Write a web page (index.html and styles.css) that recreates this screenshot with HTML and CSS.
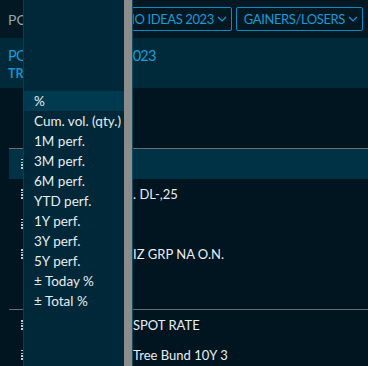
FILE: index.html
```html
<!DOCTYPE html>
<html lang="en">
<head>
    <meta charset="UTF-8">
    <meta name="viewport" content="width=device-width, initial-scale=1.0">
    <title>Portfolio Ideas</title>
    <link rel="stylesheet" href="styles.css">
</head>
<body>
    <div class="app">
        <div class="topbar">
            <div class="page-label">PORTFOLIO</div>
            <div class="selects">
                <button class="select">PORTFOLIO IDEAS 2023
                    <svg class="chevron" width="10" height="6" viewBox="0 0 10 6"><path d="M1 1l4 4 4-4" fill="none" stroke="currentColor" stroke-width="1.2"/></svg>
                </button>
                <button class="select">GAINERS/LOSERS
                    <svg class="chevron" width="10" height="6" viewBox="0 0 10 6"><path d="M1 1l4 4 4-4" fill="none" stroke="currentColor" stroke-width="1.2"/></svg>
                </button>
            </div>
        </div>

        <div class="title-band">
            <div class="title">PORTFOLIO IDEAS 2023</div>
            <div class="subtitle">TRENDS</div>
        </div>

        <div class="positions">
            <div class="group">
                <div class="row active"><span class="handle"></span><span class="lead"><span>BASF SE</span></span></div>
                <div class="row"><span class="handle"></span><span class="lead"><span>COCA-COLA CO</span></span><span class="name">. DL-,25</span></div>
                <div class="row"><span class="handle"></span><span class="lead"><span>SAP SE</span></span></div>
                <div class="row"><span class="handle"></span><span class="lead"><span>SCHWE</span></span><span class="name">IZ GRP NA O.N.</span></div>
                <div class="row empty"></div>
            </div>
            <div class="group">
                <div class="row"><span class="handle"></span><span class="lead"><span>EUR/USD</span></span><span class="name">SPOT RATE</span></div>
                <div class="row"><span class="handle"></span><span class="lead"><span>Euro</span></span><span class="name">Tree Bund 10Y 3</span></div>
            </div>
        </div>

        <div class="menu">
            <ul class="menu-list">
                <li class="menu-item selected">%</li>
                <li class="menu-item">Cum. vol. (qty.)</li>
                <li class="menu-item">1M perf.</li>
                <li class="menu-item">3M perf.</li>
                <li class="menu-item">6M perf.</li>
                <li class="menu-item">YTD perf.</li>
                <li class="menu-item">1Y perf.</li>
                <li class="menu-item">3Y perf.</li>
                <li class="menu-item">5Y perf.</li>
                <li class="menu-item">± Today %</li>
                <li class="menu-item">± Total %</li>
            </ul>
            <div class="scrollbar"></div>
        </div>
    </div>
</body>
</html>
```

FILE: styles.css
```css
body {
    margin: 0;
    background-color: #001520;
    font-family: Lato, "Noto Sans", sans-serif;
    color: #e8eef2;
    overflow: hidden;
}

.app {
    position: relative;
    height: 366px;
    overflow: hidden;
}

.topbar {
    height: 38px;
    display: flex;
    align-items: center;
    gap: 8px;
    padding: 0 5px 0 8px;
    background-color: #021923;
}

.page-label {
    flex: 1;
    min-width: 0;
    overflow: hidden;
    white-space: nowrap;
    font-size: 14px;
    color: #93a5b1;
}

.selects {
    flex: none;
    display: flex;
    gap: 4px;
}

.select {
    display: flex;
    align-items: center;
    gap: 3px;
    height: 24px;
    padding: 0 4px 0 7px;
    background: transparent;
    border: 1px solid #0a8cc4;
    border-radius: 2px;
    color: #1a9ad6;
    font-family: inherit;
    font-size: 13px;
    letter-spacing: -0.4px;
    white-space: nowrap;
}

.title-band {
    height: 50px;
    box-sizing: border-box;
    padding: 8px 8px 0;
    background-color: #002a3a;
}

.title {
    font-size: 14.5px;
    letter-spacing: -0.75px;
    color: #1a9ad6;
    line-height: 20px;
    white-space: nowrap;
}

.subtitle {
    font-size: 12.5px;
    font-weight: bold;
    color: #1a8fcb;
    line-height: 16px;
}

.positions {
    margin: 60px 0 0 9px;
}

.group {
    border-top: 1px solid #6b6f72;
}

.row {
    height: 30px;
    display: flex;
    align-items: center;
    font-size: 13px;
    white-space: nowrap;
}

.row.active {
    background-color: #003246;
}

.row.empty {
    height: 40px;
}

.handle {
    flex: none;
    width: 2px;
    height: 10px;
    margin: 0 14px 0 12px;
    background-image: repeating-linear-gradient(to bottom, #c3ccd1 0 1.5px, transparent 1.5px 2.7px);
}

.lead {
    flex: none;
    display: flex;
    justify-content: flex-end;
    width: 96px;
    overflow: hidden;
}

.menu {
    position: absolute;
    top: 0;
    left: 23px;
    width: 110px;
    height: 366px;
    box-sizing: border-box;
    display: flex;
    border-left: 1px solid #0e3b4d;
    border-right: 1px solid #0b4b62;
    background-color: #002838;
}

.menu-list {
    flex: 1;
    list-style: none;
    margin: 0;
    padding: 91px 0 0;
}

.menu-item {
    height: 20px;
    line-height: 20px;
    padding-left: 10px;
    font-size: 13.5px;
    color: #e8eef2;
    white-space: nowrap;
}

.menu-item.selected {
    background-color: #003a50;
}

.scrollbar {
    width: 8px;
    background-color: #8c8c8c;
}
```
